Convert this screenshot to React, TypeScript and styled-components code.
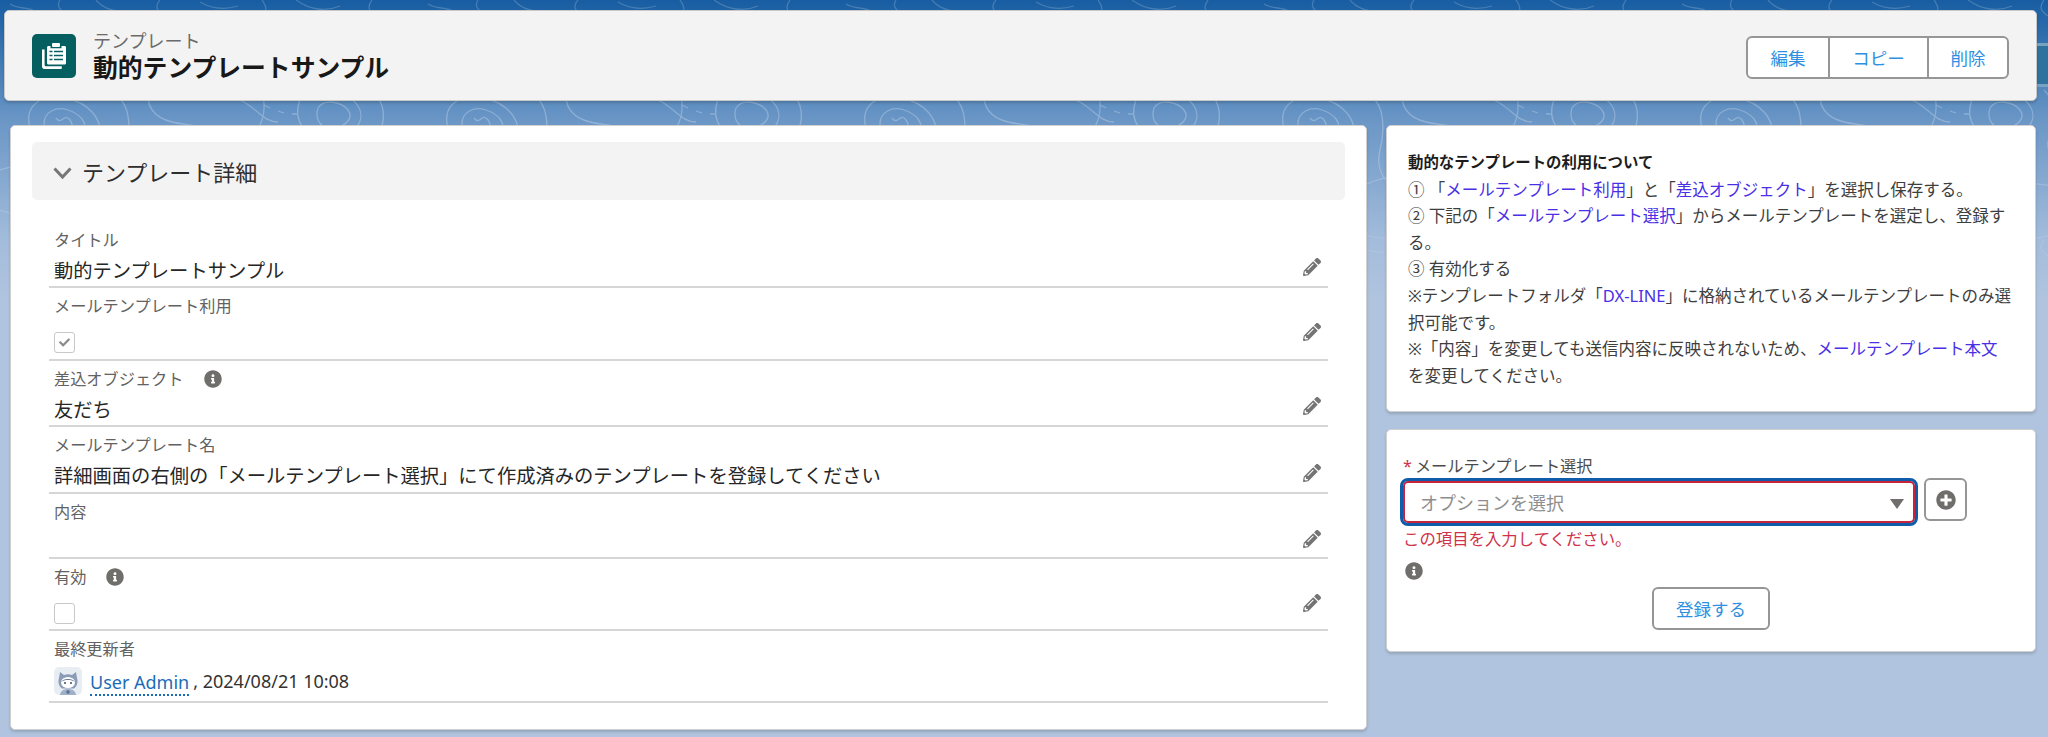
import React from "react";
import styled, { createGlobalStyle } from "styled-components";
import { FaInfoCircle, FaPencilAlt, FaPlusCircle, FaCheck } from "react-icons/fa";

const Global = createGlobalStyle`
  html, body { margin: 0; padding: 0; height: 737px; overflow: hidden; }
  body {
    font-family: "Noto Sans", "Noto Sans CJK JP", sans-serif;
    background: linear-gradient(#185da2 0, #3f7ab5 60px, #6a96c6 120px, #a3bcdb 240px, #b0c4df 300px);
  }
`;

const Backdrop = styled.svg`
  position: absolute;
  left: 0;
  top: 0;
  width: 2048px;
  height: 320px;
  pointer-events: none;
`;

const DockTab = styled.div`
  position: absolute;
  left: 2033px;
  top: 43px;
  width: 15px;
  height: 44px;
  box-sizing: border-box;
  background: #2f719f;
  border: 3px solid rgba(255, 255, 255, 0.35);
  border-right: 0;
  border-radius: 5px 0 0 5px;
`;

const Page = styled.div`
  position: relative;
  padding: 10px 11px 0 4px;
  display: flex;
  flex-direction: column;
  gap: 24px;
`;

const Header = styled.header`
  height: 91px;
  box-sizing: border-box;
  background: #f3f3f3;
  border: 1px solid #c9c9c9;
  border-radius: 5px;
  box-shadow: 0 2px 3px rgba(0, 0, 0, 0.18);
  display: flex;
  align-items: center;
  justify-content: space-between;
  padding: 0 27px;
`;

const Identity = styled.div`
  display: flex;
  align-items: center;
  gap: 17px;
`;

const ObjectIcon = styled.svg`
  width: 44px;
  height: 44px;
  display: block;
`;

const Titles = styled.div`
  display: flex;
  flex-direction: column;
`;

const Eyebrow = styled.div`
  font-size: 18px;
  line-height: 22px;
  color: #6b6b6b;
`;

const PageTitle = styled.h1`
  margin: 0;
  font-size: 24.8px;
  line-height: 30px;
  font-weight: 700;
  color: #181818;
`;

const ButtonGroup = styled.div`
  margin-top: 4px;
  display: flex;
  height: 43px;
  box-sizing: border-box;
  border: 2px solid #969696;
  border-radius: 6px;
  background: #fff;
`;

const GroupButton = styled.div<{ $w: number }>`
  width: ${(p) => p.$w}px;
  box-sizing: border-box;
  display: flex;
  align-items: center;
  justify-content: center;
  font-size: 17.5px;
  color: #2f8fe0;
  & + & {
    border-left: 2px solid #969696;
  }
`;

const Columns = styled.div`
  display: flex;
  gap: 19px;
  padding-left: 6px;
  align-items: flex-start;
`;

const Card = styled.section`
  box-sizing: border-box;
  background: #fff;
  border: 1px solid #d0d0d0;
  border-radius: 5px;
  box-shadow: 0 2px 3px rgba(0, 0, 0, 0.16);
`;

const DetailCard = styled(Card)`
  width: 1357px;
  height: 605px;
  padding: 16px 21px;
`;

const SectionBar = styled.div`
  height: 58px;
  background: #f3f3f3;
  border-radius: 5px;
  display: flex;
  align-items: center;
  padding-left: 21px;
  gap: 10px;
  font-size: 22px;
  color: #2e2e2e;
  margin-bottom: 22px;
`;

const Chevron = styled.svg`
  width: 19px;
  height: 13px;
  margin-top: 5px;
`;

const Fields = styled.div`
  margin: 0 17px;
`;

const Row = styled.div<{ $h: number }>`
  height: ${(p) => p.$h}px;
  box-sizing: border-box;
  border-bottom: 2px solid #d6d6d6;
  padding: 6px 7px 0 5px;
  display: flex;
  justify-content: space-between;
  align-items: flex-end;
`;

const FieldBody = styled.div`
  display: flex;
  flex-direction: column;
  align-self: flex-start;
`;

const Label = styled.div`
  display: flex;
  align-items: center;
  gap: 20px;
  font-size: 16.2px;
  line-height: 24px;
  color: #626262;
`;

const Value = styled.div`
  display: flex;
  align-items: center;
  margin-top: 5px;
  font-size: 19.3px;
  line-height: 28px;
  color: #262626;
`;

const Check = styled.div`
  margin-top: 14px;
  width: 21px;
  height: 21px;
  box-sizing: border-box;
  border: 1.5px solid #c9c9c9;
  border-radius: 3px;
  display: flex;
  align-items: center;
  justify-content: center;
  color: #8a8a8a;
  font-size: 11px;
`;

const Pencil = styled(FaPencilAlt)<{ $b: number }>`
  width: 18px;
  height: 18px;
  color: #747474;
  margin-bottom: ${(p) => p.$b}px;
  flex: none;
`;

const Info = styled(FaInfoCircle)`
  width: 18px;
  height: 18px;
  color: #706e6b;
  flex: none;
`;

const Avatar = styled.svg`
  width: 28px;
  height: 28px;
  margin-right: 8px;
  flex: none;
`;

const UserLink = styled.span`
  color: #1b6cb8;
  font-size: 18px;
  border-bottom: 2px dotted #1b6cb8;
  line-height: 23px;
  margin-top: 5px;
`;

const Stamp = styled.span`
  font-size: 18px;
  color: #333;
  padding-left: 4px;
`;

const SideColumn = styled.div`
  width: 650px;
  display: flex;
  flex-direction: column;
  gap: 17px;
`;

const NoteCard = styled(Card)`
  height: 287px;
  padding: 24px 21px;
  font-size: 16.5px;
  line-height: 26.6px;
  color: #3e3e3e;
  white-space: nowrap;
`;

const NoteTitle = styled.div`
  font-size: 15.4px;
  font-weight: 700;
  color: #1c1c1c;
`;

const NoteLink = styled.span`
  color: #4a2fe6;
`;

const FormCard = styled(Card)`
  height: 223px;
  padding: 24px 13px 0;
  display: flex;
  flex-direction: column;
`;

const FormLabel = styled.div`
  font-size: 16.2px;
  line-height: 24px;
  color: #4c4c4c;
  padding-left: 3px;
  display: flex;
  gap: 3px;
`;

const Star = styled.span`
  color: #d0324a;
`;

const SelectRow = styled.div`
  display: flex;
  gap: 6px;
  align-items: flex-start;
`;

const SelectBox = styled.div`
  width: 518px;
  height: 48px;
  box-sizing: border-box;
  border: 3px solid #0f5cab;
  border-radius: 8px;
  box-shadow: inset 0 0 0 2px #c8223c;
  display: flex;
  align-items: center;
  justify-content: space-between;
  padding: 0 11px 0 17px;
  font-size: 18px;
  color: #8e8e8e;
  background: #fff;
`;

const Caret = styled.div`
  width: 0;
  height: 0;
  border-left: 7.5px solid transparent;
  border-right: 7.5px solid transparent;
  border-top: 10px solid #706e6b;
  margin-top: 3px;
`;

const AddButton = styled.div`
  width: 43px;
  height: 43px;
  box-sizing: border-box;
  border: 2px solid #969696;
  border-radius: 6px;
  display: flex;
  align-items: center;
  justify-content: center;
  color: #706e6b;
  font-size: 20px;
`;

const ErrorText = styled.div`
  font-size: 16.4px;
  line-height: 24px;
  margin-top: 1px;
  padding-left: 3px;
  color: #d0324a;
`;

const HelpRow = styled.div`
  padding: 7px 0 0 5px;
  height: 25px;
  box-sizing: content-box;
  display: flex;
  align-items: center;
`;

const SubmitRow = styled.div`
  display: flex;
  justify-content: center;
  margin-top: 4px;
`;

const SubmitButton = styled.div`
  width: 118px;
  height: 43px;
  box-sizing: border-box;
  border: 2px solid #969696;
  border-radius: 6px;
  display: flex;
  align-items: center;
  justify-content: center;
  font-size: 17.5px;
  color: #2f8fe0;
`;

const topo = [
  "M30 128c-6-22 10-34 34-30s40 20 36 44-26 30-46 22-20-22-24-36z",
  "M44 124c0-12 12-18 24-14s20 12 16 24-16 14-26 10-14-10-14-20z",
  "M56 118c6 8 8-6 14 2s-2 12 2 14",
  "M108 92c22 6 24 32 18 58s12 40 30 44",
  "M148 90c-2 18 8 28 24 32s40 2 52 18",
  "M200 88c14 10 30 6 44 14s20 20 34 20",
  "M250 98l6 3m8 4l6 3m8 3l6 2m8 1l6 0",
  "M262 92c4 14 2 28-6 40",
  "M300 100c-8 20 6 40 28 40s40-18 30-34-44-22-58-6z",
  "M318 108c-4 12 4 22 16 20s20-10 14-18-24-12-30-2z",
  "M372 90c14 14 14 30 6 46s8 30 30 34",
  "M10 4c10 6 18 2 26 8M60 0c-4 6 0 10 6 14M96 0c8 10 22 12 34 12",
  "M160 0c-6 6-2 12 2 14M200 2c10 6 24 8 38 4M262 0c6 8 4 12 0 16",
  "M296 0c14 10 30 12 44 6M372 0c-6 8-2 12 4 16",
  "M0 170c20-8 36-2 54 10s50 8 70 0 50-8 84 8 60 12 90 2 70-10 120 4",
  "M0 210c26 10 70 4 100 20s60 6 94-6 80 0 110 12 60 4 114-12",
];

export default function App() {
  return (
    <>
      <Global />
      <Backdrop viewBox="0 0 2048 320">
        <defs>
          <linearGradient id="fade" x1="0" y1="0" x2="0" y2="1">
            <stop offset="0" stopColor="#fff" stopOpacity="0.18" />
            <stop offset="0.4" stopColor="#fff" stopOpacity="0.26" />
            <stop offset="1" stopColor="#fff" stopOpacity="0" />
          </linearGradient>
          <pattern id="topo" width="418" height="240" patternUnits="userSpaceOnUse">
            {topo.map((d) => (
              <path key={d} d={d} fill="none" stroke="#fff" strokeWidth="1.3" />
            ))}
          </pattern>
          <mask id="fadeMask">
            <rect width="2048" height="320" fill="url(#fade)" />
          </mask>
        </defs>
        <rect width="2048" height="320" fill="url(#topo)" mask="url(#fadeMask)" />
      </Backdrop>
      <DockTab />
      <Page>
        <Header>
          <Identity>
            <ObjectIcon viewBox="0 0 44 44">
              <rect width="44" height="44" rx="5" fill="#055e5f" />
              <path d="M10 15.5h2.6v15.2c0 .9.7 1.6 1.6 1.6h15.6v1.7c0 .5-.4 1-1 1H12.2c-1.2 0-2.2-1-2.2-2.2z" fill="#fff" />
              <path d="M15.5 12h3v2.2h11V12h3c1 0 1.5.6 1.5 1.5v15.4c0 .9-.6 1.5-1.5 1.5h-16c-.9 0-1.5-.6-1.5-1.5V13.500c0-.9.6-1.500 1.500-1.500z" fill="#fff" />
              <rect x="20" y="9" width="8" height="4" rx="1" fill="#fff" />
              <path d="M17.500 17.500h3M22 17.500h9M17.500 21.500h3M22 21.500h9M17.500 25.500h3M22 25.500h9" stroke="#055e5f" strokeWidth="1.6" />
            </ObjectIcon>
            <Titles>
              <Eyebrow>テンプレート</Eyebrow>
              <PageTitle>動的テンプレートサンプル</PageTitle>
            </Titles>
          </Identity>
          <ButtonGroup>
            <GroupButton $w={80}>編集</GroupButton>
            <GroupButton $w={99}>コピー</GroupButton>
            <GroupButton $w={80}>削除</GroupButton>
          </ButtonGroup>
        </Header>
        <Columns>
          <DetailCard>
            <SectionBar>
              <Chevron viewBox="0 0 19 13">
                <path d="M1.500 1.500L9.500 10l8-8.500" fill="none" stroke="#767676" strokeWidth="3" />
              </Chevron>
              テンプレート詳細
            </SectionBar>
            <Fields>
              <Row $h={66}>
                <FieldBody>
                  <Label>タイトル</Label>
                  <Value>動的テンプレートサンプル</Value>
                </FieldBody>
                <Pencil $b={10} />
              </Row>
              <Row $h={73}>
                <FieldBody>
                  <Label>メールテンプレート利用</Label>
                  <Check><FaCheck /></Check>
                </FieldBody>
                <Pencil $b={18} />
              </Row>
              <Row $h={66}>
                <FieldBody>
                  <Label>差込オブジェクト<Info /></Label>
                  <Value>友だち</Value>
                </FieldBody>
                <Pencil $b={10} />
              </Row>
              <Row $h={67}>
                <FieldBody>
                  <Label>メールテンプレート名</Label>
                  <Value>詳細画面の右側の「メールテンプレート選択」にて作成済みのテンプレートを登録してください</Value>
                </FieldBody>
                <Pencil $b={10} />
              </Row>
              <Row $h={65}>
                <FieldBody>
                  <Label>内容</Label>
                </FieldBody>
                <Pencil $b={9} />
              </Row>
              <Row $h={72}>
                <FieldBody>
                  <Label>有効<Info /></Label>
                  <Check />
                </FieldBody>
                <Pencil $b={17} />
              </Row>
              <Row $h={72}>
                <FieldBody>
                  <Label>最終更新者</Label>
                  <Value>
                    <Avatar viewBox="0 0 28 28">
                      <rect width="28" height="28" rx="5" fill="#e8edf4" />
                      <path d="M6 5l4 3c2.500-1 5.500-1 8 0l4-3 1 6c1.500 4.500-.5 9-3 10.500h-12C5.500 20 3.500 15.500 5 11z" fill="#8a9cb8" />
                      <ellipse cx="14" cy="15.500" rx="7" ry="5.600" fill="#fff" />
                      <path d="M7 15c2-4 12-4 14 0-2-1.500-4-2-7-2s-5 .5-7 2z" fill="#5f7190" />
                      <circle cx="11" cy="16" r="1" fill="#3d4a60" />
                      <circle cx="17" cy="16" r="1" fill="#3d4a60" />
                      <path d="M6 28c.5-4 3.500-6 8-6s7.500 2 8 6z" fill="#9fb0c9" />
                      <circle cx="14" cy="25" r="1.800" fill="#5f7190" />
                    </Avatar>
                    <UserLink>User Admin</UserLink>
                    <Stamp>, 2024/08/21 10:08</Stamp>
                  </Value>
                </FieldBody>
              </Row>
            </Fields>
          </DetailCard>
          <SideColumn>
            <NoteCard>
              <NoteTitle>動的なテンプレートの利用について</NoteTitle>
              ① 「<NoteLink>メールテンプレート利用</NoteLink>」と「<NoteLink>差込オブジェクト</NoteLink>」を選択し保存する。
              <br />
              ② 下記の「<NoteLink>メールテンプレート選択</NoteLink>」からメールテンプレートを選定し、登録す
              <br />
              る。
              <br />
              ③ 有効化する
              <br />
              ※テンプレートフォルダ「<NoteLink>DX-LINE</NoteLink>」に格納されているメールテンプレートのみ選
              <br />
              択可能です。
              <br />
              ※「内容」を変更しても送信内容に反映されないため、<NoteLink>メールテンプレート本文</NoteLink>
              <br />
              を変更してください。
            </NoteCard>
            <FormCard>
              <FormLabel><Star>*</Star>メールテンプレート選択</FormLabel>
              <SelectRow>
                <SelectBox>
                  オプションを選択
                  <Caret />
                </SelectBox>
                <AddButton><FaPlusCircle /></AddButton>
              </SelectRow>
              <ErrorText>この項目を入力してください。</ErrorText>
              <HelpRow><Info /></HelpRow>
              <SubmitRow>
                <SubmitButton>登録する</SubmitButton>
              </SubmitRow>
            </FormCard>
          </SideColumn>
        </Columns>
      </Page>
    </>
  );
}
